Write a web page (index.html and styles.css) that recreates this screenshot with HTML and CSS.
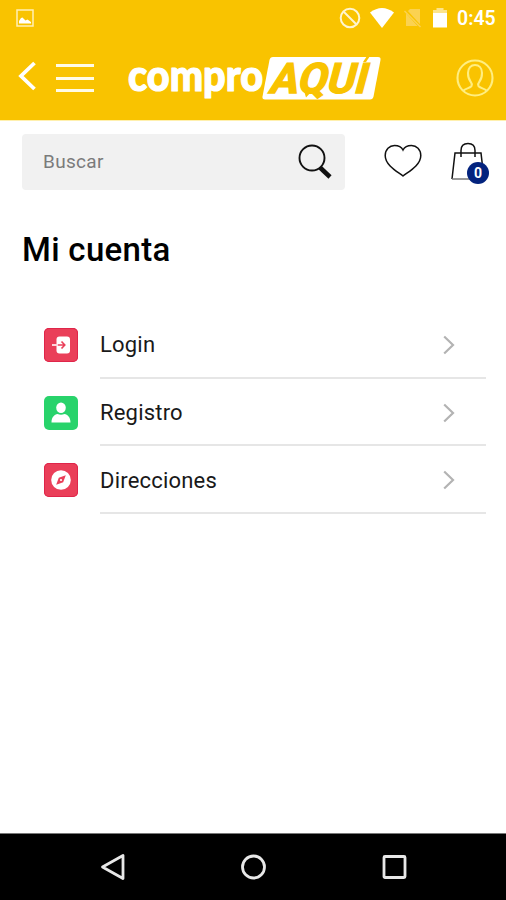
FILE: index.html
```html
<!DOCTYPE html>
<html lang="es">
<head>
    <meta charset="UTF-8">
    <meta name="viewport" content="width=device-width, initial-scale=1.0">
    <title>Mi cuenta</title>
    <link rel="stylesheet" href="styles.css">
</head>
<body>
    <header class="header">
        <div class="status">
            <svg class="picture" width="18" height="18" viewBox="0 0 18 18">
                <rect x="1" y="1" width="16" height="16" fill="none" stroke="#fff0b5" stroke-width="1.5"/>
                <path d="M3 14.5v-2.500l2-3 1.500-.5 3 3 2-1 3.500 2.500v1.500z" fill="#fff"/>
            </svg>
            <svg width="22" height="22" viewBox="0 0 22 22" fill="none" stroke="#fff5cf" stroke-width="2">
                <circle cx="11" cy="11" r="9.300"/>
                <path d="M4.500 4.500l13 13"/>
            </svg>
            <svg class="wifi" width="24" height="20" viewBox="0 0 24 20">
                <path d="M0 4.500Q12-4.500 24 4.500L12 20z" fill="#fff"/>
            </svg>
            <svg class="sim" width="18" height="20" viewBox="0 0 18 20">
                <path d="M6 1h10v17H2V5z" fill="#fbd251"/>
                <path d="M1 2l15.500 17" stroke="#f9c300" stroke-width="3"/>
                <path d="M.5 3l16 16" stroke="#fbd251" stroke-width="1.500"/>
            </svg>
            <svg class="battery" width="14" height="20" viewBox="0 0 14 20">
                <path d="M3.500 0h7v2H14v4H0V2h3.500z" fill="#fde48b"/>
                <path d="M0 5h14v14.500H0z" fill="#fff"/>
            </svg>
            <span class="clock">0:45</span>
        </div>
        <nav class="nav">
            <svg class="back" width="18" height="30" viewBox="0 0 18 30" fill="none" stroke="#fff" stroke-width="3.800">
                <path d="M16.500 2L3 15l13.500 13"/>
            </svg>
            <div class="menu">
                <span></span>
                <span></span>
                <span></span>
            </div>
            <svg class="logo" width="256" height="70" viewBox="0 -10 256 70">
                <text class="logo-name" x="2" y="37" textLength="135" lengthAdjust="spacingAndGlyphs">compro</text>
                <path d="M147 3h105q3 0 2.500 3l-7 36.500q-.6 3-3.500 3H139q-3 0-2.500-3l7-36.500q.6-3 3.500-3z" fill="#fff"/>
                <text class="logo-here" transform="translate(142 38.500) skewX(-15)" x="0" y="0" textLength="97" lengthAdjust="spacingAndGlyphs">AQUI</text>
                <path d="M178 37h8l-6 6.500z" fill="#f9c300"/>
                <path d="M237 8l4-6h3l-4 6z" fill="#f9c300"/>
            </svg>
            <svg class="user" width="38" height="38" viewBox="0 0 38 38" fill="none" stroke="#ffee80" stroke-width="2.100">
                <circle cx="19" cy="19" r="17.500"/>
                <path d="M7.500 31.500c2-2 7-2.500 8-4.500.7-1.600.2-3-1-4.500-2-2.500-2.500-5-2.500-8.500 0-5 3-8 7-8s7 3 7 8c0 3.500-.5 6-2.500 8.500-1.200 1.500-1.700 2.900-1 4.500 1 2 6 2.500 8 4.500"/>
            </svg>
        </nav>
    </header>

    <main class="content">
        <div class="tools">
            <div class="search">
                <span>Buscar</span>
                <svg width="34" height="36" viewBox="0 0 34 36" fill="none" stroke="#111">
                    <circle cx="14" cy="14" r="12.500" stroke-width="1.900"/>
                    <path d="M22 23.500L32 33" stroke-width="4.500"/>
                </svg>
            </div>
            <svg class="heart" width="38" height="34" viewBox="0 0 38 34" fill="none" stroke="#111" stroke-width="1.500">
                <path d="M19 32C14 28 1.200 21.500 1.200 11.500 1.200 5.500 5.500 1.500 10.500 1.500c4 0 7 1.500 8.500 4.500 1.500-3 4.500-4.500 8.500-4.500 5 0 9.300 4 9.300 10C36.800 21.500 24 28 19 32z"/>
            </svg>
            <div class="bag">
                <svg width="34" height="40" viewBox="0 0 34 40" fill="none" stroke="#111" stroke-width="1.500">
                    <path d="M1 37L4 11h26l3 26"/>
                    <path d="M1 37h32" stroke="#777"/>
                    <path d="M10 15V8.500c0-4.500 2.500-7 7-7s7 2.500 7 7V15"/>
                </svg>
                <span class="badge">0</span>
            </div>
        </div>

        <h1>Mi cuenta</h1>

        <ul class="options">
            <li>
                <div class="icon red">
                    <svg width="34" height="34" viewBox="0 0 34 34">
                        <rect x="12.500" y="8.500" width="13.500" height="17" rx="3" fill="#fff"/>
                        <path d="M8 17h6" stroke="#fbd5db" stroke-width="2"/>
                        <path d="M14 17h6M17.500 13.500l3.300 3.500-3.300 3.500" fill="none" stroke="#ea3f59" stroke-width="1.600"/>
                    </svg>
                </div>
                <div class="label">
                    <span>Login</span>
                    <svg width="12" height="20" viewBox="0 0 12 20"><path d="M1.200 1.500L10 10l-8.800 8.500"/></svg>
                </div>
            </li>
            <li>
                <div class="icon green">
                    <svg width="34" height="34" viewBox="0 0 34 34" fill="#fff">
                        <ellipse cx="17" cy="11.800" rx="4.800" ry="5.300"/>
                        <path d="M7.500 26.500c0-5.500 3-8 6-8.500q3.500 1.500 7 0c3 .5 6 3 6 8.500z"/>
                    </svg>
                </div>
                <div class="label">
                    <span>Registro</span>
                    <svg width="12" height="20" viewBox="0 0 12 20"><path d="M1.200 1.500L10 10l-8.800 8.500"/></svg>
                </div>
            </li>
            <li>
                <div class="icon red">
                    <svg width="34" height="34" viewBox="0 0 34 34">
                        <circle cx="17" cy="17" r="9.800" fill="#fff"/>
                        <path d="M21.800 12.200l-2.600 7-7 2.600 2.600-7z" fill="#ea3f59"/>
                        <circle cx="17" cy="17" r="1.100" fill="#fff"/>
                    </svg>
                </div>
                <div class="label">
                    <span>Direcciones</span>
                    <svg width="12" height="20" viewBox="0 0 12 20"><path d="M1.200 1.500L10 10l-8.800 8.500"/></svg>
                </div>
            </li>
        </ul>
    </main>

    <footer class="android">
        <svg width="26" height="28" viewBox="0 0 26 28"><path d="M23 2.500v23L2.500 14z"/></svg>
        <svg width="26" height="28" viewBox="0 0 26 28"><circle cx="12.500" cy="14" r="11"/></svg>
        <svg width="26" height="28" viewBox="0 0 26 28"><rect x="3" y="3.500" width="21" height="21" rx="1"/></svg>
    </footer>
</body>
</html>
```
FILE: styles.css
```css
:root{
    --yellow: #f9c300;
}
*{
    box-sizing: border-box;
}
body{
    margin: 0;
    height: 900px;
    display: flex;
    flex-direction: column;
    background-color: #fff;
    font-family: Roboto, "Liberation Sans", sans-serif;
    overflow: hidden;
}
svg{
    display: block;
    flex-shrink: 0;
}
.header{
    height: 121px;
    background-color: var(--yellow);
    border-bottom: 1px solid #fff0ae;
}
.status{
    height: 36px;
    display: flex;
    align-items: center;
    padding: 0 10px 0 16px;
}
.picture{
    margin-right: auto;
}
.wifi{
    margin-left: 9px;
}
.sim{
    margin-left: 10px;
}
.battery{
    margin: 0 10px 0 11px;
}
.clock{
    width: 39px;
    color: #fff;
    font-size: 19.500px;
    font-weight: 600;
    line-height: 22px;
    padding-top: 2px;
    white-space: nowrap;
}
.nav{
    height: 84px;
    display: flex;
    align-items: center;
    padding: 0 12px 0 18px;
}
.back{
    margin-top: -5px;
}
.menu{
    width: 38px;
    height: 28px;
    margin-left: 20px;
    display: flex;
    flex-direction: column;
    justify-content: space-between;
}
.menu span{
    height: 3px;
    background-color: #fffbe5;
}
.logo{
    margin: 2px auto 0 32px;
}
.logo-name{
    font: 900 43px Lato, sans-serif;
    fill: #fff;
    stroke: #fff;
    stroke-width: 1.200;
    stroke-linejoin: round;
}
.logo-here{
    font: 700 42px Roboto, sans-serif;
    fill: var(--yellow);
    stroke: var(--yellow);
    stroke-width: 1.400;
}
.content{
    flex: 1;
    padding: 13px 20px 0 22px;
}
.tools{
    display: flex;
    align-items: center;
    height: 56px;
}
.search{
    width: 323px;
    height: 56px;
    display: flex;
    align-items: center;
    justify-content: space-between;
    padding: 0 13px 0 21px;
    border-radius: 4px;
    background-color: #f1f1f1;
    color: #7b7b7b;
    font-size: 19px;
    letter-spacing: 0.3px;
}
.search span{
    padding-bottom: 2px;
}
.heart{
    margin-left: 39px;
    margin-top: -3px;
}
.bag{
    position: relative;
    margin-left: 29px;
}
.badge{
    position: absolute;
    left: 16px;
    top: 20px;
    width: 22px;
    height: 22px;
    border-radius: 50%;
    background-color: #03237e;
    color: #fff;
    font-size: 14px;
    font-weight: 700;
    line-height: 22px;
    text-align: center;
}
h1{
    margin: 40px 0 0;
    color: #000;
    font-size: 33px;
    font-weight: 500;
    line-height: 40px;
    letter-spacing: 0.3px;
}
.options{
    list-style: none;
    margin: 41px 0 0;
    padding: 0 0 0 22px;
}
.options li{
    height: 67.700px;
    display: flex;
    align-items: center;
}
.icon{
    width: 34px;
    height: 34px;
    border-radius: 5px;
}
.red{
    background-color: #ea3f59;
    box-shadow: inset 0 0 0 1px #df254a;
}
.green{
    background-color: #28d36b;
}
.label{
    flex: 1;
    height: 100%;
    display: flex;
    align-items: center;
    justify-content: space-between;
    margin-left: 22px;
    padding: 2px 31px 0 0;
    border-bottom: 2px solid #e6e6e6;
    color: #191919;
    font-size: 22px;
    letter-spacing: 0.2px;
}
.label svg{
    fill: none;
    stroke: #b3b3b3;
    stroke-width: 2.200;
}
.android{
    height: 67px;
    display: flex;
    align-items: center;
    justify-content: space-between;
    padding: 0 99px 0 100px;
    border-top: 1px solid #777;
    background-color: #000;
}
.android svg{
    fill: none;
    stroke: #e8e8e8;
    stroke-width: 2.800;
    stroke-linejoin: round;
}
```
